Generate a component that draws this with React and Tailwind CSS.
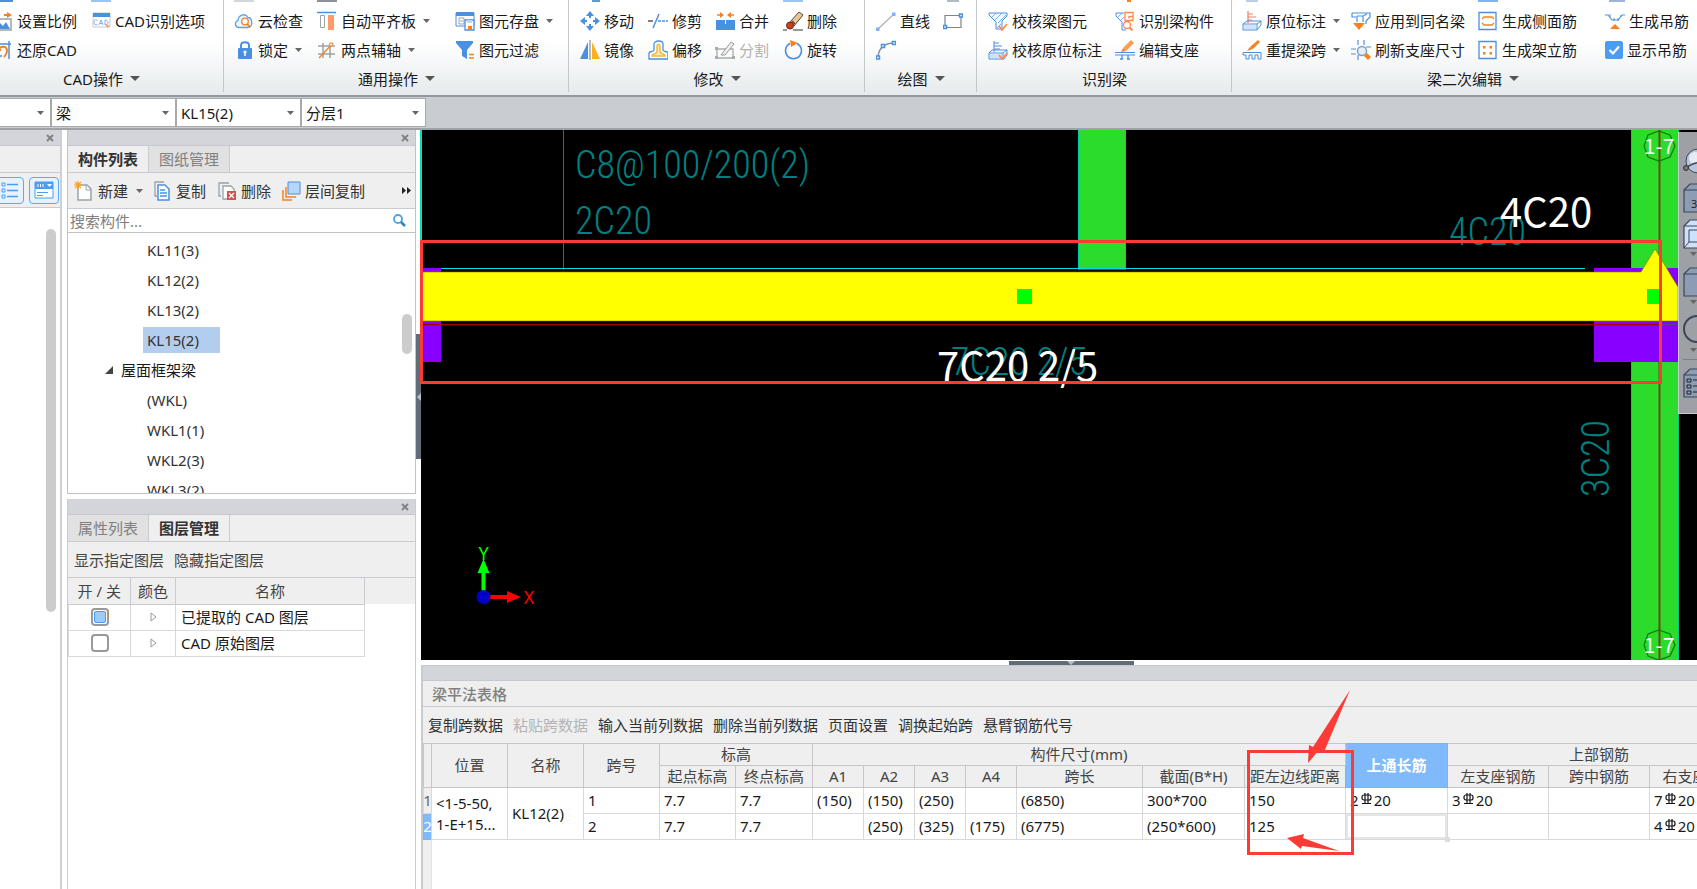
import React, { useState } from "react";

function Icon({ children, w = 20, h = 20, className = "" }) {
  return (
    <svg
      width={w}
      height={h}
      viewBox={`0 0 ${w} ${h}`}
      fill="none"
      aria-hidden="true"
      className={`block shrink-0 ${className}`}
    >
      {children}
    </svg>
  );
}

const BLUE = "#4a90e2";
const ORANGE = "#f58220";
const GRAY = "#9aa3ab";

// ribbon icons, all on a 20x20 grid
const ICONS = {
  scale: (
    <>
      <path d="M1 8h17v11H1z" stroke={GRAY} strokeWidth="1.5" fill="#fff" />
      <path d="M2 18l5-6 3 3 3-4 4 7z" fill={BLUE} />
      <path d="M11 4h6" stroke={ORANGE} strokeWidth="2" />
      <path d="M14 1l5 3-5 3z" fill={ORANGE} />
    </>
  ),
  restore: (
    <>
      <path d="M1 4h17M16 1v18M5 1v18M1 16h8" stroke={BLUE} strokeWidth="1.5" />
      <path d="M5 10c3-5 9-4 9 1 0 3-1 4-3 6" stroke={ORANGE} strokeWidth="2" />
      <path d="M3 6l1 7 5-3z" fill={ORANGE} />
    </>
  ),
  cadOptions: (
    <>
      <path d="M2 2h17v14H2z" stroke="#c3cad1" fill="#fff" />
      <path d="M2 2h17v4H2z" fill={BLUE} />
      <path
        d="M6.500 9.500C4 8 3 9.500 3 11.500s1.500 3 3.500 2M8 14l2-5 2 5M8.700 12.500h2.600M14 9v5c4 0 4-5 0-5z"
        stroke="#7fb2ee"
      />
      <path d="M14 12l5 3.500-2.500.5.5 3z" fill="#ff9a6b" />
    </>
  ),
  cloud: (
    <>
      <path
        d="M5 16.500C1 16.500 0 11 4 9.500 4 4 11 1.500 14 6.500c4 0 6 9 0 10z"
        fill="#eef6ff"
        stroke="#5aa2ea"
        strokeWidth="1.300"
      />
      <circle cx="11" cy="10.500" r="3.300" fill="#fff" stroke={ORANGE} strokeWidth="1.300" />
      <path d="M13 13l3 3" stroke={ORANGE} strokeWidth="1.800" />
    </>
  ),
  lock: (
    <>
      <path d="M7 9V5.500C7 1 15 1 15 5.500V9" stroke={BLUE} strokeWidth="2" />
      <rect x="4" y="8" width="14" height="11" rx="1" fill={BLUE} />
      <circle cx="11" cy="12" r="1.600" fill="#fff" />
      <path d="M11 12v4" stroke="#fff" strokeWidth="1.500" />
    </>
  ),
  align: (
    <>
      <path d="M0 1.500h19" stroke={BLUE} strokeWidth="1.500" />
      <path d="M3.500 4.500h4v12h-4z" stroke={GRAY} fill="#fff" />
      <path d="M11 4h6v15h-6z" fill="#ff9a6b" />
    </>
  ),
  grid: (
    <>
      <path d="M6 3v15M13 3v15M1 6h17M1 14h17" stroke={GRAY} strokeWidth="1.500" />
      <path d="M2 18L16 3" stroke={ORANGE} strokeWidth="1.300" />
      <circle cx="14" cy="4.500" r="1.600" fill="#fff" stroke={ORANGE} />
    </>
  ),
  store: (
    <>
      <path d="M1 2h18v13H1z" stroke={BLUE} fill="#fff" />
      <path d="M1 1h18v4H1z" fill={BLUE} />
      <path d="M4 7h5v6H4zM5 10h3" stroke={GRAY} />
      <path d="M10 9h9v10h-9z" fill="#fff" stroke={BLUE} strokeWidth="1.300" />
      <path d="M12 9h5v3h-5z" fill="#bcd8f7" />
      <path d="M13 15h4v4h-4z" fill={ORANGE} />
    </>
  ),
  filter: (
    <>
      <path d="M1 1h17v2l-6 7v9l-5-3v-6L1 3z" fill={BLUE} />
      <path d="M14 14.500h5M14 18h5" stroke={ORANGE} strokeWidth="1.500" />
    </>
  ),
  move: (
    <>
      <path d="M10 3v4M10 13v4M3 10h4M13 10h4" stroke={BLUE} strokeWidth="2" />
      <path d="M10 0l4 5H6zM10 20l4-5H6zM0 10l5-4v8zM20 10l-5-4v8z" fill={BLUE} />
    </>
  ),
  mirror: (
    <>
      <path d="M8 2v17H0z" fill={BLUE} />
      <path d="M12 2v17h8z" fill="#ffb020" />
      <path d="M10 0v20" stroke={GRAY} strokeWidth="1.500" />
    </>
  ),
  trim: (
    <>
      <path d="M0 10h5" stroke="#555" strokeWidth="1.500" />
      <path d="M5 17l6-14" stroke={BLUE} strokeWidth="1.500" />
      <path d="M10 10h10" stroke={BLUE} strokeWidth="1.500" strokeDasharray="3 1" />
    </>
  ),
  offset: (
    <>
      <path
        d="M1 19v-6c0-2 5-1 5-3V4c0-4 9-4 9 0v6c0 2 5 1 5 3v6z"
        fill="#fff"
        stroke={BLUE}
        strokeWidth="1.300"
      />
      <path d="M4 16c0-3 5-1 5-5V6c0-2 3-2 3 0v5c0 4 5 2 5 5z" fill="#ffe9b8" stroke="#f5b940" strokeWidth="1.500" />
    </>
  ),
  merge: (
    <>
      <path d="M1 9h19v10H1z" fill={BLUE} />
      <path d="M10.500 9v4" stroke="#fff" />
      <path d="M2 4h6M13 4h6" stroke={ORANGE} strokeWidth="1.500" />
      <path d="M5 1l4 3-4 3zM16 1l-4 3 4 3z" fill={ORANGE} />
    </>
  ),
  split: (
    <>
      <path d="M2 9h16v9H2z" stroke="#aaa" strokeWidth="1.300" />
      <path d="M0 7h3v3H0zM0 16h3v3H0zM17 16h3v3h-3z" fill="#aaa" />
      <path d="M6 15L16 2l3 2-9 11z" fill="#eee" stroke="#999" />
    </>
  ),
  erase: (
    <>
      <path d="M0 19h4M10 19h10" stroke="#777" strokeWidth="1.500" />
      <path d="M7 11L16 1l4 3-9 11z" fill="#e9c79a" stroke="#5d4634" />
      <path d="M9 10l3 3" stroke="#5d4634" strokeWidth="1.500" />
      <circle cx="7" cy="14.500" r="3.500" fill="#c8401c" stroke="#6e2a15" />
    </>
  ),
  rotate: (
    <>
      <path d="M7 3.500a8 8 0 1 0 7 0" stroke={BLUE} strokeWidth="1.500" />
      <path d="M7 0l8 3-7 4z" fill={ORANGE} />
    </>
  ),
  line: (
    <>
      <path d="M2 18L18 3" stroke="#a9b0b7" strokeWidth="1.200" />
      <path d="M0 16.500h3.500V20H0zM16 1.500h3.500V5H16z" fill="#7fb2ee" />
    </>
  ),
  rect: (
    <>
      <path d="M2 4.500h16v12H2z" stroke="#7d858c" strokeWidth="1.200" />
      <path d="M.5 14.500h3v3h-3zM16.500 3h3v3h-3z" fill="#fff" stroke={BLUE} strokeWidth="1.500" />
    </>
  ),
  arc: (
    <>
      <path d="M2 18C2 9 8 3 18 3" stroke="#8b939a" strokeWidth="1.500" />
      <path d="M.5 16h3v3h-3zM5.500 4.500h3v3h-3zM16.500 1.500h3v3h-3z" fill="#fff" stroke={BLUE} strokeWidth="1.500" />
    </>
  ),
  checkBeam: (
    <>
      <path d="M1 2h18v3l-5 5v8H8V11L1 4z" fill="#f2f8ff" stroke={BLUE} />
      <path d="M4 6l4-4M7 9l7-7M10 12l8-8M9 17l4-4" stroke={BLUE} strokeWidth=".7" />
      <path d="M11 15l3 4 5-6" stroke="#ff8a50" strokeWidth="1.800" />
    </>
  ),
  checkNote: (
    <>
      <path d="M6 1v11M6 3h5M6 6h8M6 9h6" stroke={BLUE} />
      <path d="M2 14h12v4H2z" fill="#cfe4fb" />
      <path d="M1 13l3-3h15v5l-3 4H1zM1 13h14l4-3M15 13v6" stroke={BLUE} />
      <path d="M11 15l3 4 5-6" stroke="#ff8a50" strokeWidth="1.800" />
    </>
  ),
  findBeam: (
    <>
      <path d="M1 2h8M1 2v3l6 6v8h4" stroke={BLUE} />
      <path d="M3 6l4-4M6 9l3-3" stroke={BLUE} strokeWidth=".7" />
      <path d="M10 1.500h8v8h-8zM18 5.500h-4v2" stroke="#ff8a50" strokeWidth="1.300" />
      <circle cx="12" cy="14" r="3.500" stroke="#ff8a50" strokeWidth="1.300" />
      <path d="M14.500 16.500l3 3" stroke="#ff8a50" strokeWidth="2" />
    </>
  ),
  editSupport: (
    <>
      <path d="M0 12.500h20M0 15h20" stroke={BLUE} />
      <path d="M7 15v4M13 15v4M5 19h3M12 19h3" stroke={BLUE} strokeWidth="1.300" />
      <path d="M8 8l8-8 3 3-8 8z" fill="#ff9a50" />
      <path d="M6 12l2-4 3 3z" fill={ORANGE} />
    </>
  ),
  note: (
    <>
      <path d="M6 0v12M6 3h5M6 6h8M6 9h4" stroke="#f0805a" strokeWidth="1.200" />
      <path d="M2 14h12v4H2z" fill="#cfe4fb" />
      <path d="M1 13l4-3h14v4l-4 5H1zM1 13h14l4-3M15 13v6" stroke={BLUE} />
    </>
  ),
  respan: (
    <>
      <path d="M1 12.500h18V19h-3v-4h-3v4h-3v-4H7v4H4v-4H1z" stroke={BLUE} />
      <path d="M8 7l8-7 2 2-7 7z" fill={ORANGE} />
      <path d="M5 11l3-4 3 2z" fill={ORANGE} />
    </>
  ),
  apply: (
    <>
      <path d="M1 2h18v4l-4 4v3M1 2v4h4M6 5h6l4-2M6 5v6M12 5v6" stroke={BLUE} strokeWidth="1.200" />
      <path d="M2 12h12l-6 7z" fill={ORANGE} />
    </>
  ),
  refresh: (
    <>
      <path d="M7 0v5M13 0v5M0 9h5M0 14h5M15 7h5M7 15v5" stroke={BLUE} strokeWidth="1.200" />
      <circle cx="11" cy="11" r="4.500" fill="#e8eef5" stroke="#7f9fc6" strokeWidth="1.500" />
      <path d="M13 16l3-3 4 4-3 3z" fill={ORANGE} />
    </>
  ),
  sideBar: (
    <>
      <path d="M1 1.500h17v17H1z" fill="#fff" stroke={BLUE} strokeWidth="1.300" />
      <path d="M4 8l2-2h8l2 2M4 12l2 2h8l2-2" stroke={ORANGE} strokeWidth="1.300" />
    </>
  ),
  erectBar: (
    <>
      <path d="M1 1.500h17v17H1z" fill="#fff" stroke={BLUE} strokeWidth="1.300" />
      <path d="M5 6h2.500v2.500H5zM11.500 6H14v2.500h-2.500zM5 12h2.500v2.500H5zM11.500 12H14v2.500h-2.500z" fill={ORANGE} />
    </>
  ),
  hangBar: (
    <>
      <path d="M0 4h3l4 5h6l4-5h3" stroke={BLUE} strokeWidth="1.200" />
      <path d="M5 3v3M9 7v3M13 7v3M16 4v2" stroke={BLUE} />
      <path d="M10 13l5 5H5z" fill={ORANGE} />
    </>
  ),
};

const GROUPS = [
  {
    label: "CAD操作",
    more: true,
    className: "-ml-[21px] w-[245px] pl-[14px]",
    cols: [
      { w: "w-[98px]", cap: "w-5 bg-[#4a90e2]", items: [["scale", "设置比例"], ["restore", "还原CAD"]] },
      { w: "w-[120px]", cap: "w-5 bg-[#9cc4f2]", items: [["cadOptions", "CAD识别选项"]] },
    ],
  },
  {
    label: "通用操作",
    more: true,
    className: "w-[345px] pl-[10px]",
    cols: [
      { w: "w-[83px]", cap: "w-5 bg-[#d3d7da]", items: [["cloud", "云检查"], ["lock", "锁定", true]] },
      { w: "w-[138px]", cap: "w-5 bg-[#8d9298]", items: [["align", "自动平齐板", true], ["grid", "两点辅轴", true]] },
      { w: "w-[106px]", cap: "", items: [["store", "图元存盘", true], ["filter", "图元过滤"]] },
    ],
  },
  {
    label: "修改",
    more: true,
    className: "w-[296px] pl-[11px]",
    cols: [
      { w: "w-[68px]", cap: "ml-3 w-2 bg-[#5d9ccf]", items: [["move", "移动"], ["mirror", "镜像"]] },
      { w: "w-[67px]", cap: "", items: [["trim", "修剪"], ["offset", "偏移"]] },
      { w: "w-[68px]", cap: "", items: [["merge", "合并"], ["split", "分割", false, true]] },
      { w: "w-[67px]", cap: "w-5 bg-[#9cc4f2]", items: [["erase", "删除"], ["rotate", "旋转"]] },
    ],
  },
  {
    label: "绘图",
    more: true,
    className: "w-[112px] pl-[11px]",
    cols: [
      { w: "w-[67px]", cap: "", items: [["line", "直线"], ["arc", ""]] },
      { w: "w-[24px]", cap: "ml-1 w-3 bg-[#b5babf]", items: [["rect", ""]] },
    ],
  },
  {
    label: "识别梁",
    className: "w-[255px] pl-[11px]",
    cols: [
      { w: "w-[127px]", cap: "", items: [["checkBeam", "校核梁图元"], ["checkNote", "校核原位标注"]] },
      { w: "w-[110px]", cap: "ml-3 w-1 bg-[#f58220]", items: [["findBeam", "识别梁构件"], ["editSupport", "编辑支座"]] },
    ],
  },
  {
    label: "梁二次编辑",
    more: true,
    className: "min-w-[482px] flex-1 pl-[10px]",
    cols: [
      { w: "w-[109px]", cap: "ml-1 w-3 bg-[#b9cfe8]", items: [["note", "原位标注", true], ["respan", "重提梁跨", true]] },
      { w: "w-[127px]", cap: "", items: [["apply", "应用到同名梁"], ["refresh", "刷新支座尺寸"]] },
      { w: "w-[127px]", cap: "w-5 bg-[#7fb2ee]", items: [["sideBar", "生成侧面筋"], ["erectBar", "生成架立筋"]] },
      { w: "w-[90px]", cap: "ml-1 w-4 bg-[#9cb4d8]", items: [["hangBar", "生成吊筋"]], check: "显示吊筋" },
    ],
  },
];

function Caret({ big }) {
  return big ? (
    <Icon w={10} h={5}>
      <path d="M0 0h10L5 5z" fill="#555" />
    </Icon>
  ) : (
    <Icon w={7} h={4}>
      <path d="M0 0h7L3.500 4z" fill="#666" />
    </Icon>
  );
}

function RibbonButton({ icon, text, more, off }) {
  return (
    <button
      type="button"
      disabled={off}
      aria-label={text || icon}
      className={`flex h-[29px] items-center whitespace-nowrap ${off ? "text-[#b0b0b0]" : ""}`}
    >
      <Icon className="mr-1">{ICONS[icon]}</Icon>
      {text}
      {more && (
        <span className="ml-[7px]">
          <Caret />
        </span>
      )}
    </button>
  );
}

function Ribbon() {
  const [showBars, setShowBars] = useState(true);
  return (
    <header className="flex h-[97px] shrink-0 border-b-2 border-[#93989c] bg-linear-to-b from-white from-45% to-[#e6eaec]">
      {GROUPS.map((g) => (
        <div key={g.label} className={`relative shrink-0 ${g.className}`}>
          <div className="flex h-[65px]">
            {g.cols.map((c, i) => (
              <div key={i} className={`shrink-0 ${c.w}`}>
                <div className={`mb-[4px] h-[2px] ${c.cap}`} />
                {c.items.map(([icon, text, more, off]) => (
                  <RibbonButton key={icon} icon={icon} text={text} more={more} off={off} />
                ))}
                {c.check && (
                  <label className="flex h-[29px] items-center gap-1 whitespace-nowrap">
                    <span className="relative h-[18px] w-[18px]">
                      <input
                        type="checkbox"
                        checked={showBars}
                        onChange={(e) => setShowBars(e.target.checked)}
                        className="block h-[18px] w-[18px] appearance-none rounded-xs border border-[#4a9cf5] checked:bg-[#4a9cf5]"
                      />
                      <Icon w={18} h={18} className="pointer-events-none absolute inset-0">
                        <path d="M4.500 9l3.500 3.500 6-7" stroke="#fff" strokeWidth="2.200" />
                      </Icon>
                    </span>
                    {c.check}
                  </label>
                )}
              </div>
            ))}
          </div>
          <div className="absolute inset-x-0 bottom-[3px] flex h-[27px] items-center justify-center gap-[7px]">
            {g.label}
            {g.more && <Caret big />}
          </div>
          <div className="absolute top-0 right-0 h-[92px] w-px bg-[#c5c8cb]" />
        </div>
      ))}
    </header>
  );
}

function SelectBar() {
  const fields = [
    ["楼层", ""],
    ["构件类型", "梁"],
    ["构件", "KL15(2)"],
    ["分层", "分层1"],
  ];
  return (
    <div className="flex h-[33px] shrink-0 items-center border-b-2 border-[#9fa3a8] bg-[#c9ccd1]">
      <div className="-ml-[74px] flex">
        {fields.map(([label, value]) => (
          <div key={label} className="relative">
            <select
              aria-label={label}
              className="block h-[29px] w-[125px] appearance-none border border-[#a9a9a9] bg-white pr-5 pl-1 outline-none"
            >
              <option>{value}</option>
            </select>
            <span className="pointer-events-none absolute top-[13px] right-[7px]">
              <Caret />
            </span>
          </div>
        ))}
      </div>
    </div>
  );
}

function PanelHeader() {
  return (
    <div className="flex h-[16px] shrink-0 items-center justify-end border-b border-[#c5c9cf] bg-[#d3d5da] pr-[6px]">
      <button type="button" aria-label="关闭">
        <Icon w={8} h={8}>
          <path d="M1 1l6 6M7 1L1 7" stroke="#808080" strokeWidth="1.800" />
        </Icon>
      </button>
    </div>
  );
}

function Tabs({ tabs, current }) {
  return (
    <div className="flex h-[27px] shrink-0 border-b border-[#c8ccd1] bg-[#efefef]">
      {tabs.map((t) => (
        <button
          key={t}
          type="button"
          className={`w-[81px] border-r border-[#c8ccd1] ${
            t === current ? "font-bold text-[#333]" : "bg-[#e1e1e1] text-[#808080]"
          }`}
        >
          {t}
        </button>
      ))}
    </div>
  );
}

function ModulePanel() {
  return (
    <aside className="flex w-[62px] shrink-0 flex-col border-r-2 border-[#cdd0d5] bg-white">
      <PanelHeader />
      <div className="h-[27px] shrink-0 border-b border-[#c8ccd1] bg-[#efefef]" />
      <div className="flex h-[35px] shrink-0 items-center gap-[5px] border-b border-[#c8ccd1] bg-[#efefef]">
        <button
          type="button"
          aria-label="列表"
          className="-ml-[6px] flex h-[27px] w-[30px] items-center justify-center rounded border border-[#5aaaf5] bg-[#e6f2fe]"
        >
          <Icon>
            <path d="M3 3h3v3H3zM3 9h3v3H3zM3 15h3v3H3z" stroke="#4a9cf5" />
            <path d="M8 4.500h11M8 10.500h11M8 16.500h11" stroke="#4a9cf5" strokeWidth="1.500" />
          </Icon>
        </button>
        <button
          type="button"
          aria-label="卡片"
          className="flex h-[27px] w-[30px] shrink-0 items-center justify-center rounded border border-[#5aaaf5] bg-[#e6f2fe]"
        >
          <Icon>
            <path d="M1 2h18v16H1z" fill="#fff" stroke="#4a9cf5" />
            <path d="M1 2h18v7H1z" fill="#4a9cf5" />
            <path d="M4 4v3M6.500 4v3M9 4v3" stroke="#fff" />
            <path d="M13 4h5l-2.500 3z" fill="#fff" />
            <path d="M3 12.500h11M3 15.500h6" stroke="#4a9cf5" />
          </Icon>
        </button>
      </div>
      <div className="flex justify-end pt-[21px] pr-[4px]">
        <div className="h-[383px] w-[10px] rounded-full bg-[#ccc]" />
      </div>
    </aside>
  );
}

const TREE = ["KL11(3)", "KL12(2)", "KL13(2)", "KL15(2)", null, "(WKL)", "WKL1(1)", "WKL2(3)", "WKL3(2)"];

function ComponentPanel() {
  const [selected, setSelected] = useState("KL15(2)");
  return (
    <section className="flex h-[364px] shrink-0 flex-col border border-t-0 border-[#bfc2c6] bg-white">
      <PanelHeader />
      <Tabs tabs={["构件列表", "图纸管理"]} current="构件列表" />
      <div className="flex h-[36px] shrink-0 items-center border-b border-[#c8ccd1] bg-[#efefef] pr-[4px] pl-[6px] text-[#333]">
        <button type="button" className="flex items-center">
          <Icon className="mr-1">
            <path d="M4 4h9l4 4v11H4z" fill="#fff" stroke={GRAY} strokeWidth="1.500" />
            <path d="M12 4v5h5" stroke={GRAY} />
            <path d="M0 4h8M4 0v8M1 1l6 6M7 1L1 7" stroke="#ffa31a" strokeWidth="1.200" />
          </Icon>
          新建
          <span className="ml-[8px]">
            <Caret />
          </span>
        </button>
        <button type="button" className="ml-[10px] flex items-center">
          <Icon className="mr-[3px]">
            <path d="M4 15H2V1h9" stroke={GRAY} strokeWidth="1.300" />
            <path d="M5 4h7l4 4v11H5z" fill="#fff" stroke={BLUE} strokeWidth="1.500" />
            <path d="M7 9h5M7 12h7M7 15h7" stroke={BLUE} strokeWidth="1.300" />
          </Icon>
          复制
        </button>
        <button type="button" className="ml-[11px] flex items-center">
          <Icon className="mr-1">
            <path d="M4 15H2V2h10" stroke={GRAY} strokeWidth="1.300" />
            <path d="M6 5h8l3 3v10H6z" fill="#fff" stroke={GRAY} strokeWidth="1.300" />
            <path d="M10 10h9v9h-9z" fill="#d94f4f" />
            <path d="M12 12l5 5M17 12l-5 5" stroke="#fff" strokeWidth="1.300" />
          </Icon>
          删除
        </button>
        <button type="button" className="ml-[10px] flex items-center">
          <Icon className="mr-1">
            <path d="M2 9v10h9M5 6v10h10" stroke={ORANGE} strokeWidth="1.500" />
            <path d="M7 1h12v12H7z" fill="#b5d6fb" stroke={BLUE} />
          </Icon>
          层间复制
        </button>
        <button type="button" aria-label="更多" className="ml-auto">
          <Icon w={9} h={7}>
            <path d="M0 0l4 3.500L0 7zM5 0l4 3.500L5 7z" fill="#222" />
          </Icon>
        </button>
      </div>
      <div className="flex h-[24px] shrink-0 items-center border-b border-[#bfc2c6] pr-[9px]">
        <input
          type="search"
          aria-label="搜索构件"
          placeholder="搜索构件..."
          className="min-w-0 flex-1 px-[2px] outline-none placeholder:text-[#808080]"
        />
        <Icon w={13} h={13}>
          <circle cx="5" cy="5" r="4" stroke="#4aa5dc" strokeWidth="1.800" />
          <path d="M8 8l4 4" stroke="#2f86c0" strokeWidth="2.500" />
        </Icon>
      </div>
      <div className="relative flex-1 overflow-hidden pt-[2px]">
        {TREE.map((name) =>
          name === null ? (
            <div key="group" className="flex h-[30px] items-center gap-2 pl-[37px]">
              <Icon w={8} h={8}>
                <path d="M8 0v8H0z" fill="#444" />
              </Icon>
              屋面框架梁
            </div>
          ) : (
            <div key={name} className="flex h-[30px] items-center pl-[75px]">
              <button
                type="button"
                onClick={() => setSelected(name)}
                className={`h-[26px] w-[77px] px-1 text-left text-[#333] ${name === selected ? "bg-[#b3cdee]" : ""}`}
              >
                {name}
              </button>
            </div>
          )
        )}
        <div className="absolute top-[81px] right-[3px] h-[40px] w-[10px] rounded-full bg-[#ccc]" />
      </div>
    </section>
  );
}

function LayerPanel() {
  const [on, setOn] = useState([true, false]);
  const layers = ["已提取的 CAD 图层", "CAD 原始图层"];
  return (
    <section className="flex flex-1 flex-col border border-t-0 border-b-0 border-[#c8ccd1] bg-white">
      <PanelHeader />
      <Tabs tabs={["属性列表", "图层管理"]} current="图层管理" />
      <div className="flex h-[35px] shrink-0 items-center gap-[10px] bg-[#efefef] pl-[6px] text-[#444]">
        <button type="button">显示指定图层</button>
        <button type="button">隐藏指定图层</button>
      </div>
      <div className="border-t border-[#c8ccd1] bg-linear-to-b from-[#efefef] from-[26px] to-white to-[26px]">
        <table className="w-[297px] table-fixed border-collapse">
          <colgroup>
            <col className="w-[62px]" />
            <col className="w-[45px]" />
            <col />
          </colgroup>
          <thead>
            <tr className="h-[26px] text-[#444]">
              <th className="border-r border-b border-[#c8ccd1] p-0 font-normal">开 / 关</th>
              <th className="border-r border-b border-[#c8ccd1] p-0 font-normal">颜色</th>
              <th className="border-r border-b border-[#c8ccd1] p-0 font-normal">名称</th>
            </tr>
          </thead>
          <tbody>
            {layers.map((name, i) => (
              <tr key={name} className="h-[26px]">
                <td className="border border-[#d9d9d9] p-0">
                  <label className="relative mx-auto block h-[18px] w-[18px]">
                    <input
                      type="checkbox"
                      aria-label={name}
                      checked={on[i]}
                      onChange={() => setOn(on.map((v, k) => (k === i ? !v : v)))}
                      className="block h-[18px] w-[18px] appearance-none rounded border-2 border-[#999] bg-white"
                    />
                    {on[i] && (
                      <span className="absolute inset-[3px] rounded-xs border border-[#4a9cf5] bg-[#9accfd]" />
                    )}
                  </label>
                </td>
                <td className="border border-[#d9d9d9] p-0">
                  <Icon w={7} h={10} className="mx-auto">
                    <path d="M1 1l5 4-5 4z" stroke="#999" />
                  </Icon>
                </td>
                <td className="border border-[#d9d9d9] p-0 pl-[5px]">{name}</td>
              </tr>
            ))}
          </tbody>
        </table>
      </div>
    </section>
  );
}

function AxisMark({ y }) {
  return (
    <g>
      <path
        d={`M1238 ${y - 15}l11 4 5 11-5 11-11 4-11-4-4-11 4-11z`}
        fill="none"
        stroke="#0b7a0b"
        strokeWidth="1.200"
      />
      <text x="1238" y={y + 8} textAnchor="middle" fill="#fff" fontSize="21" className="font-['Noto_Sans_CJK_SC',sans-serif]">
        1-7
      </text>
    </g>
  );
}

function Drawing() {
  return (
    <svg className="absolute inset-0 h-full w-full overflow-visible" aria-label="梁平面图">
      <path d="M0 0v138" stroke="#00e0c0" strokeWidth="2" />
      <path d="M142.500 0v143" stroke="#008080" />

      <rect x="657" y="0" width="47" height="141" fill="#2bdc2b" />
      <path d="M657.500 0v141M704.500 0v141" stroke="#00c8a0" />
      <rect x="1210" y="0" width="47" height="530" fill="#2bdc2b" />
      <path d="M1210.500 0v530M1257.500 0v530" stroke="#00c896" />
      <rect x="0" y="138" width="20" height="94" fill="#8800ff" />
      <rect x="1173" y="138" width="84" height="94" fill="#8800ff" />
      <path d="M1238.500 0v138M1238.500 232v298" stroke="#6b4a10" strokeWidth="2" />

      <path d="M20 138.500h1144" stroke="#00dce0" />
      <path d="M20 140.500h1153" stroke="#000" strokeWidth="2" />
      <path d="M0 142h1220l14-23 23 38v34H0z" fill="#ffff00" stroke="#808000" strokeWidth=".6" />
      <path d="M0 194.500h1239" stroke="#a80000" strokeWidth="1.500" />
      <path d="M1239 194.500h18" stroke="#554488" />
      <rect x="596" y="159" width="15" height="15" fill="#00ff00" />
      <rect x="1226" y="159" width="15" height="15" fill="#00ff00" />

      <g fill="#008080" fontSize="38" className="font-['Roboto_Condensed','Liberation_Sans_Narrow','Roboto',sans-serif] font-light">
        <text x="154" y="48">C8@100/200(2)</text>
        <text x="154" y="104">2C20</text>
        <text x="1028" y="115">4C20</text>
        <text x="530" y="245">7C20 2/5</text>
        <text transform="translate(1188 367) rotate(-90)">3C20</text>
      </g>
      <g fill="#fff" fontSize="40" className="font-['Noto_Sans_CJK_SC',sans-serif]">
        <text x="1079" y="97">4C20</text>
        <text x="516" y="251">7C20 2/5</text>
      </g>
      <AxisMark y={16} />
      <AxisMark y={515} />

      <path d="M62.500 467v-28" stroke="#00ff00" strokeWidth="4" />
      <path d="M62.500 429l6 14h-12z" fill="#00ff00" />
      <path d="M62 467h26" stroke="#ff0000" strokeWidth="4" />
      <path d="M100 467l-14-6v12z" fill="#ff0000" />
      <circle cx="62.500" cy="467" r="7" fill="#0000c8" />
      <g fontSize="18" textAnchor="middle" className="font-['Noto_Sans',sans-serif]">
        <text x="62.500" y="430" fill="#00ff00">Y</text>
        <text x="108" y="474" fill="#ff0000">X</text>
      </g>

      <rect x="0.500" y="111.500" width="1239" height="141" fill="none" stroke="#fc3a36" strokeWidth="3" />
    </svg>
  );
}

function Cube({ fill, children }) {
  return (
    <Icon w={30} h={30}>
      <path d="M1 7l6-6h22v22l-6 6H1z" fill={fill} stroke="#3b4656" strokeWidth="1.200" />
      <path d="M1 7h22v22M23 7l6-6" stroke="#3b4656" strokeWidth="1.200" />
      {children}
    </Icon>
  );
}

function ViewToolbar() {
  return (
    <div className="absolute top-[2px] right-0 flex w-[19px] flex-col items-start overflow-hidden border-b border-l border-[#c9ccd0] bg-[#9da0a5] pt-[12px] pb-[15px] pl-[4px]">
      <button type="button" aria-label="旋转视图" className="h-[36px]">
        <Icon w={30} h={28}>
          <circle cx="15" cy="13" r="12" fill="#b9c6d8" stroke="#3b4656" />
          <circle cx="12" cy="10" r="6" fill="#e6ecf4" />
          <path d="M3 20C10 14 20 12 28 18" stroke="#3b4656" strokeWidth="1.500" />
          <circle cx="3" cy="20" r="2.500" fill="#777" stroke="#333" />
        </Icon>
      </button>
      <button type="button" aria-label="三维" className="h-[36px]">
        <Cube fill="#8c9cb5">
          <text x="8" y="25" fill="#222" fontSize="11">
            3D
          </text>
        </Cube>
      </button>
      <button type="button" aria-label="俯视" className="h-[36px]">
        <Cube fill="#cfe2fb">
          <path d="M6 11h12v12H6zM1 29l5-6" stroke="#3b4656" />
        </Cube>
      </button>
      <span className="mb-[8px] pl-[7px]">
        <Caret />
      </span>
      <button type="button" aria-label="实体" className="h-[36px]">
        <Cube fill="#8c9cb5" />
      </button>
      <span className="mb-[8px] pl-[7px]">
        <Caret />
      </span>
      <button type="button" aria-label="环绕" className="h-[36px]">
        <Icon w={30} h={30}>
          <circle cx="14" cy="14" r="13" stroke="#3b4656" strokeWidth="2" />
        </Icon>
      </button>
      <span className="mb-[7px] pl-[7px]">
        <Caret />
      </span>
      <span className="mb-[8px] h-px w-full bg-[#7d8085]" />
      <button type="button" aria-label="显示设置">
        <Cube fill="#8c9cb5">
          <path d="M4 11h4v3H4zM4 17h4v3H4zM4 23h4v3H4zM10 12h5M10 18h5M10 24h5" stroke="#222" />
        </Cube>
      </button>
    </div>
  );
}

// HRB400 rebar sign
function Rebar({ count, size }) {
  return (
    <span className="flex items-center">
      {count}
      <svg width="15" height="14" viewBox="0 0 15 14" fill="none" className="mb-1" aria-hidden="true">
        <rect x="3" y="3" width="9" height="5" rx="2" stroke="#111" strokeWidth="1.200" />
        <path d="M6 1v11M9 1v11M3 11.500h9" stroke="#111" strokeWidth="1.200" />
      </svg>
      {size}
    </span>
  );
}

const COLS = [
  "w-[8px]", "w-[76px]", "w-[76px]", "w-[76px]", "w-[76px]", "w-[77px]", "w-[51px]", "w-[51px]", "w-[51px]",
  "w-[51px]", "w-[126px]", "w-[102px]", "w-[101px]", "w-[102px]", "w-[101px]", "w-[101px]", "w-[101px]",
];

const SUB_HEADS = [
  "起点标高", "终点标高", "A1", "A2", "A3", "A4", "跨长", "截面(B*H)", "距左边线距离", "左支座钢筋", "跨中钢筋", "右支座钢筋",
];

const SPANS = [
  ["1", "7.7", "7.7", "(150)", "(150)", "(250)", "", "(6850)", "300*700", "150"],
  ["2", "7.7", "7.7", "", "(250)", "(325)", "(175)", "(6775)", "(250*600)", "125"],
];

function BeamTable() {
  const th = "border border-[#c6c6c6] p-0 font-normal whitespace-nowrap";
  const td = "border border-[#d9d9d9] p-0 pl-[4px] whitespace-nowrap";
  return (
    <table className="w-[1327px] table-fixed border-collapse leading-[21px]">
      <colgroup>
        {COLS.map((w, i) => (
          <col key={i} className={w} />
        ))}
      </colgroup>
      <thead className="bg-[#efefef] text-[#444]">
        <tr className="h-[21px]">
          <th rowSpan={2} className={th} aria-label="行号" />
          <th rowSpan={2} className={th}>位置</th>
          <th rowSpan={2} className={th}>名称</th>
          <th rowSpan={2} className={th}>跨号</th>
          <th colSpan={2} className={th}>标高</th>
          <th colSpan={7} className={th}>构件尺寸(mm)</th>
          <th rowSpan={2} className="border border-[#7ab4f5] bg-[#80bafb] p-0 font-bold text-white">
            上通长筋
          </th>
          <th colSpan={3} className={th}>上部钢筋</th>
        </tr>
        <tr className="h-[21px]">
          {SUB_HEADS.map((h) => (
            <th key={h} className={th}>{h}</th>
          ))}
        </tr>
      </thead>
      <tbody>
        {SPANS.map((span, r) => (
          <tr key={r} className="h-[26px]">
            <th
              scope="row"
              className={`border p-0 text-center font-normal ${
                r === 1 ? "border-[#7ab4f5] bg-[#80bafb] font-bold text-white" : "border-[#d9d9d9] bg-[#efefef] text-[#666]"
              }`}
            >
              <span className="-mx-1">{r + 1}</span>
            </th>
            {r === 0 && (
              <>
                <td rowSpan={2} className={td}>
                  &lt;1-5-50,
                  <br />
                  1-E+15...
                </td>
                <td rowSpan={2} className={td}>KL12(2)</td>
              </>
            )}
            {span.map((v, i) => (
              <td key={i} className={td}>{v}</td>
            ))}
            <td className={`${td} ${r === 1 ? "relative" : ""}`}>
              {r === 0 ? (
                <Rebar count="2" size="20" />
              ) : (
                <>
                  <span className="absolute inset-0 border-2 border-[#e6e6e6]" />
                  <span className="absolute -right-[3px] -bottom-[3px] h-[5px] w-[5px] bg-[#dcdcdc]" />
                </>
              )}
            </td>
            <td className={td}>{r === 0 && <Rebar count="3" size="20" />}</td>
            <td className={td} />
            <td className={td}>
              <Rebar count={r === 0 ? "7" : "4"} size="20" />
            </td>
          </tr>
        ))}
      </tbody>
    </table>
  );
}

function BeamPanel() {
  const actions = ["复制跨数据", "粘贴跨数据", "输入当前列数据", "删除当前列数据", "页面设置", "调换起始跨", "悬臂钢筋代号"];
  return (
    <section className="relative h-[229px] shrink-0">
      <div className="flex h-[5px] justify-center bg-white pt-px">
        <div className="mr-[-24px] flex w-[125px] justify-center bg-[#616c78]">
          <Icon w={8} h={4}>
            <path d="M0 0h8L4 4z" fill="#b9bfc5" />
          </Icon>
        </div>
      </div>
      <div className="flex h-[224px] flex-col border-l-2 border-[#c8ccd1] bg-white">
        <div className="h-[16px] shrink-0 border-y border-[#c5c9cf] bg-[#d3d5da]" />
        <h2 className="flex h-[26px] shrink-0 items-center border-b border-[#c8ccd1] bg-[#efefef] pl-[9px] font-medium text-[#808080]">
          梁平法表格
        </h2>
        <div className="flex h-[36px] shrink-0 items-center gap-[10px] bg-[#efefef] pl-[5px] whitespace-nowrap text-[#333]">
          {actions.map((a, i) => (
            <button key={a} type="button" disabled={i === 1} className="disabled:text-[#b4b4b4]">
              {a}
            </button>
          ))}
        </div>
        <div className="flex-1 overflow-hidden">
          <BeamTable />
          <div className="h-full w-[9px] border-r border-[#e4e4e4] bg-[#efefef]" />
        </div>
      </div>
      <svg className="pointer-events-none absolute inset-0 h-full w-full" aria-hidden="true">
        <rect x="827.500" y="91.500" width="104" height="102" fill="none" stroke="#fc3a36" strokeWidth="3" />
        <path d="M929 30L903 92l-5-2-11 13 1-18 4 2z" fill="#fc3a36" />
        <path d="M866 178l17-4-1 4 36 13-37-5-1 3z" fill="#fc3a36" />
      </svg>
    </section>
  );
}

export default function App() {
  return (
    <div className="flex h-screen flex-col overflow-hidden bg-white font-['Noto_Sans','Noto_Sans_CJK_SC',sans-serif] text-[15px] leading-[20px] text-[#1a1a1a]">
      <Ribbon />
      <SelectBar />
      <main className="flex min-h-0 flex-1">
        <ModulePanel />
        <div className="ml-[5px] flex w-[349px] shrink-0 flex-col gap-[5px]">
          <ComponentPanel />
          <LayerPanel />
        </div>
        <div className="w-[5px] shrink-0 pt-[204px]">
          <div className="flex h-[125px] items-center bg-[#616c78]">
            <Icon w={5} h={8}>
              <path d="M5 0v8L1 4z" fill="#b9bfc5" />
            </Icon>
          </div>
        </div>
        <div className="flex min-w-0 flex-1 flex-col">
          <div className="relative flex-1 bg-black">
            <Drawing />
            <ViewToolbar />
          </div>
          <BeamPanel />
        </div>
      </main>
    </div>
  );
}
